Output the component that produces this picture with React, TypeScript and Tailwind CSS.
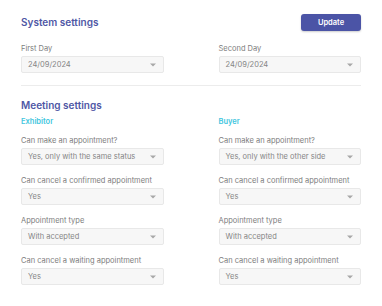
import React from "react";

function Caret() {
  return (
    <svg width="6" height="4" viewBox="0 0 6 4" className="shrink-0">
      <path d="M0 0.5 L6 0.5 L3 3.5 Z" fill="#a8a8a8" />
    </svg>
  );
}

function Select({ value }: { value: string }) {
  return (
    <div className="flex h-[17px] items-center justify-between rounded-[2px] border border-[#e8e8e8] bg-[#f7f7f7] pl-[6px] pr-[7px]">
      <span className="text-[7.5px] leading-none text-[#858585]">{value}</span>
      <Caret />
    </div>
  );
}

function Field({ label, value }: { label: string; value: string }) {
  return (
    <div className="flex flex-col">
      <div className="h-[11px] pt-[1px] text-[7.5px] leading-[10px] text-[#7d7d7d]">{label}</div>
      <div className="mt-[2px]">
        <Select value={value} />
      </div>
    </div>
  );
}

export default function App() {
  const ex = [
    ["Can make an appointment?", "Yes, only with the same status"],
    ["Can cancel a confirmed appointment", "Yes"],
    ["Appointment type", "With accepted"],
    ["Can cancel a waiting appointment", "Yes"],
  ];
  const buy = [
    ["Can make an appointment?", "Yes, only with the other side"],
    ["Can cancel a confirmed appointment", "Yes"],
    ["Appointment type", "With accepted"],
    ["Can cancel a waiting appointment", "Yes"],
  ];
  return (
    <div
      className="h-[306px] w-[382px] bg-white px-[21px] pt-[14px]"
      style={{ fontFamily: "Inter, 'Liberation Sans', sans-serif" }}
    >
      <div className="flex h-[17px] items-center justify-between">
        <div className="text-[10px] font-semibold text-[#4f57a5]">System settings</div>
        <button className="flex h-[17px] w-[60px] items-center justify-center rounded-[3px] bg-[#4b54a6] text-[7.5px] font-semibold text-white shadow-[0_1px_2px_rgba(0,0,0,0.2)]">
          Update
        </button>
      </div>
      <div className="mt-[12px] grid grid-cols-2 gap-x-[55px]">
        <Field label="First Day" value="24/09/2024" />
        <Field label="Second Day" value="24/09/2024" />
      </div>
      <div className="mt-[12px] h-px bg-[#ececec]" />
      <div className="mt-[11px] text-[10px] font-semibold leading-[16px] text-[#4f57a5]">Meeting settings</div>
      <div className="mt-[4px] grid grid-cols-2 gap-x-[55px]">
        <div className="flex flex-col">
          <div className="text-[7.5px] font-semibold leading-[10px] text-[#3fc6de]">Exhibitor</div>
          <div className="mt-[8px] flex flex-col gap-[10px]">
            {ex.map(([l, v]) => (
              <Field key={l} label={l} value={v} />
            ))}
          </div>
        </div>
        <div className="flex flex-col">
          <div className="text-[7.5px] font-semibold leading-[10px] text-[#3fc6de]">Buyer</div>
          <div className="mt-[8px] flex flex-col gap-[10px]">
            {buy.map(([l, v]) => (
              <Field key={l} label={l} value={v} />
            ))}
          </div>
        </div>
      </div>
    </div>
  );
}
